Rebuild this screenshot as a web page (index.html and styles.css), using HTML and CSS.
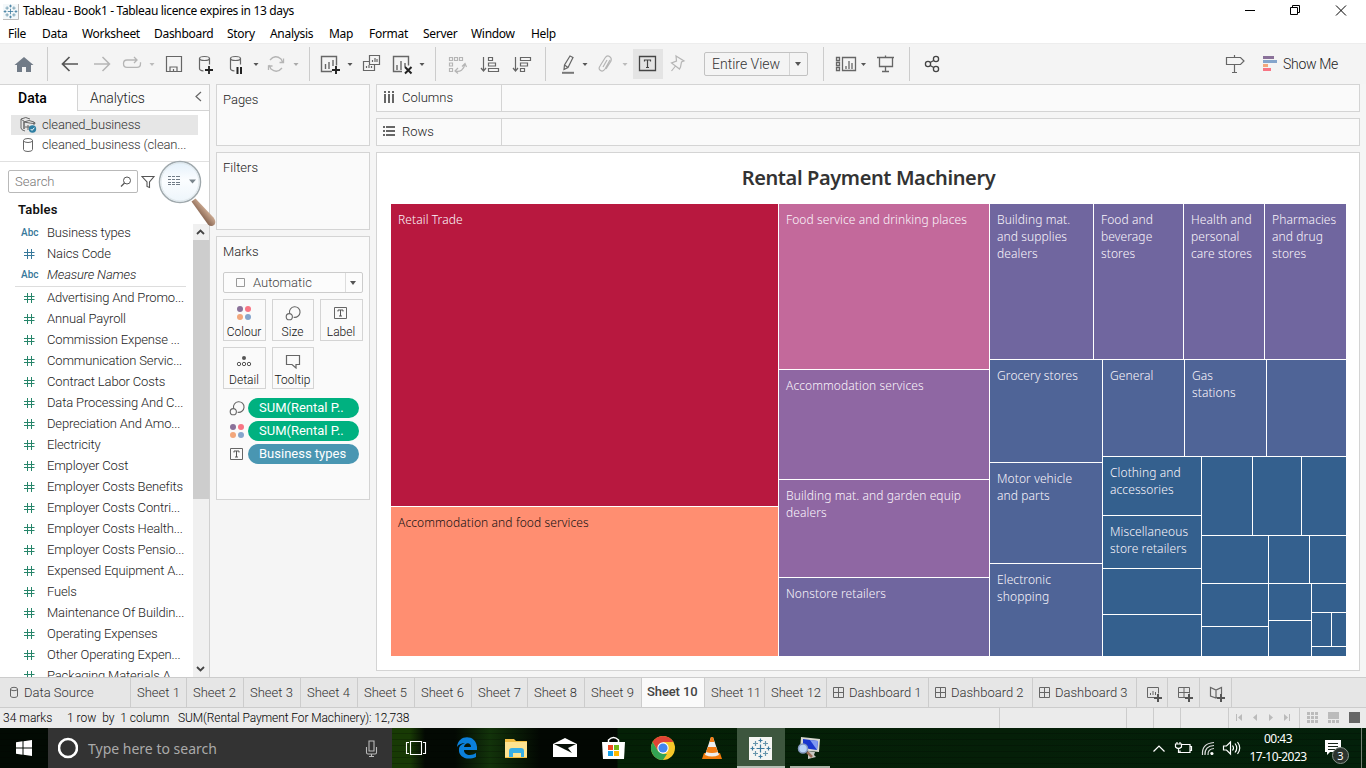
FILE: index.html
```html
<!DOCTYPE html>
<html lang="en">
<head>
<meta charset="utf-8">
<title>Tableau - Book1</title>
<link rel="stylesheet" href="styles.css">
</head>
<body>
<svg width="0" height="0" class="defs">
  <defs>
    <symbol id="hash" viewBox="0 0 12 12"><path d="M4.500 1v10M8.500 1v10M1 4.500h10.500M1 7.500h10.500" fill="none" stroke="currentColor" stroke-width="1"/></symbol>
    <symbol id="dash" viewBox="0 0 12 12"><path d="M.5 .5h10v10h-10zM5.500 .5v10M.5 5.500h10" fill="none" stroke="#666"/></symbol>
    <symbol id="dots" viewBox="0 0 16 16"><circle cx="4" cy="4" r="3" fill="#8a7199"/><circle cx="12" cy="4" r="3" fill="#f87584"/><circle cx="4" cy="12" r="3" fill="#f2a77c"/><circle cx="12" cy="12" r="3" fill="#85a5cc"/></symbol>
    <symbol id="size" viewBox="0 0 16 16"><g fill="none" stroke="#666" stroke-width="1.100"><path d="M4.600 8.300a5.300 5.300 0 1 1 4 3.900"/><circle cx="4.300" cy="11.700" r="3.100"/></g></symbol>
    <symbol id="tbox" viewBox="0 0 14 12"><path d="M.5.5h12v11H.5z" fill="none" stroke="#666"/><path d="M4 4.500V3h5v1.500M6.500 3v6M5 9h3" fill="none" stroke="#555"/></symbol>
    <symbol id="flake" viewBox="0 0 22 22"><g fill="none" stroke="#3c7a9e" stroke-width="1.200"><path d="M11 7v8M7 11h8M11 1v4M9 3h4M11 17v4M9 19h4M3 9v4M1 11h4M19 9v4M17 11h4"/><path stroke="#6795ac" d="M6 3.500v5M3.500 6h5M16 3.500v5M13.500 6h5M6 13.500v5M3.500 16h5M16 13.500v5M13.500 16h5"/></g></symbol>
  </defs>
</svg>
<div class="app">
  <header class="titlebar">
    <svg class="logo" width="16" height="16"><path fill="#f4f8fa" d="M0 0h15v15H0z"/><path d="M15.500 0v15.500H0" fill="none" stroke="#bbb"/><use href="#flake" width="15" height="15"/></svg>
    <span class="wintitle">Tableau - Book1 - Tableau licence expires in 13 days</span>
    <svg width="136" height="24" viewBox="1230 0 136 24" fill="none" stroke="#000"><path d="M1245 10.500h10M1290.500 7.500h7v7h-7zM1292.500 7.500v-2h7v7h-2M1336 5.500l10 10M1346 5.500l-10 10"/></svg>
  </header>
  <nav class="menu"><span>File</span><span>Data</span><span>Worksheet</span><span>Dashboard</span><span>Story</span><span>Analysis</span><span>Map</span><span>Format</span><span>Server</span><span>Window</span><span>Help</span></nav>
  <div class="toolbar">
    <svg width="48" height="41" viewBox="0 43 48 41"><path fill="#717b87" d="M24 57l9.500 8H31v7h-5v-5h-4v5h-5v-7h-2.500z"/><path d="M47.500 47v34" stroke="#ccc"/></svg>
    <svg width="38" height="41" viewBox="48 43 38 41"><path d="M78 64H63M69.500 57l-7 7 7 7" fill="none" stroke="#555" stroke-width="1.700"/></svg>
    <svg width="32" height="41" viewBox="86 43 32 41"><path d="M94 64h15M102.500 57l7 7-7 7" fill="none" stroke="#b5b5b5" stroke-width="1.500"/></svg>
    <svg width="42" height="41" viewBox="118 43 42 41"><path d="M137 60h-10q-3.500 0-3.500 3.700t3.500 3.700h10q3.500 0 3.500-3.700v-1.500M134 57l3 3-3 3" fill="none" stroke="#b5b5b5" stroke-width="1.300"/><path d="M149.500 63h5l-2.500 3z" fill="#bbb"/></svg>
    <svg width="30" height="41" viewBox="160 43 30 41"><path d="M166.500 56.500h15v15h-15zM170 71.500V67h7v4.500M173.500 69v2" fill="none" stroke="#666" stroke-width="1.200"/></svg>
    <svg width="30" height="41" viewBox="190 43 30 41"><g fill="none" stroke="#666" stroke-width="1.200"><ellipse cx="204.500" cy="58.500" rx="5" ry="2"/><path d="M199.500 58.500v10q0 2 4 2.500M209.500 58.500v6"/></g><path d="M209 66v8M205 70h8" stroke="#222" stroke-width="1.800"/></svg>
    <svg width="42" height="41" viewBox="220 43 42 41"><g fill="none" stroke="#666" stroke-width="1.200"><ellipse cx="235.500" cy="58.500" rx="5" ry="2"/><path d="M230.500 58.500v10q0 2 4 2.500M240.500 58.500v6"/></g><path d="M237.500 67v7M241 67v7" stroke="#222" stroke-width="2"/><path d="M253.500 63h5l-2.500 3z" fill="#555"/></svg>
    <svg width="48" height="41" viewBox="262 43 48 41"><path d="M270 60q5-6 11-1l2 4M282 68q-5 6-11 1l-2-4M279.500 62.500h4v-4M272.500 66h-4v4" fill="none" stroke="#b5b5b5" stroke-width="1.300"/><path d="M293.500 63h5l-2.500 3z" fill="#aaa"/><path d="M309.500 47v34" stroke="#ccc"/></svg>
    <svg width="46" height="41" viewBox="310 43 46 41"><path d="M332 71.500h-10.500v-15h15v9M325.500 64v5M329 62v7M333 60v6" fill="none" stroke="#666" stroke-width="1.400"/><path d="M336 66v8M332 70h8" stroke="#222" stroke-width="1.900"/><path d="M347.500 63h5l-2.500 3z" fill="#555"/></svg>
    <svg width="30" height="41" viewBox="356 43 30 41"><path d="M369.500 55.500h10v9h-10zM369 61.500h-5.500v9h11v-6M372.500 60v2M375 58v4M377 59v3M366.500 66v2M369 65v3M371.500 66v2" fill="none" stroke="#666" stroke-width="1.200"/></svg>
    <svg width="50" height="41" viewBox="386 43 50 41"><path d="M402 71.500h-8.500v-15h15v9M397 65v5M401 61v9M405 63v4" fill="none" stroke="#666" stroke-width="1.400"/><path d="M405 67l6.500 6.500m0-6.500l-6.500 6.500" stroke="#222" stroke-width="2"/><path d="M419.500 63h5l-2.500 3z" fill="#555"/><path d="M435.500 47v34" stroke="#ccc"/></svg>
    <svg width="39" height="41" viewBox="436 43 39 41"><path d="M449.500 57.500h3v3h-3zM454.500 57.500h3v3h-3zM459.500 57.500h3v3h-3zM449.500 63h3v3h-3zM449.500 68.500h3v3h-3zM455 71q8 2 10-7M462 66.500l3-3 1.500 3.500M458 68l-3 3 3 2.500" fill="none" stroke="#b5b5b5" stroke-width="1.200"/></svg>
    <svg width="32" height="41" viewBox="475 43 32 41"><path d="M483.500 57v14M481 68l2.500 3 2.500-3M488.500 57.500h4v3h-4zM488.500 63h7v3h-7zM488.500 68.500h10v3h-10z" fill="none" stroke="#666" stroke-width="1.200"/></svg>
    <svg width="39" height="41" viewBox="507 43 39 41"><path d="M515.500 57v14M513 68l2.500 3 2.500-3M520.500 57.500h10v3h-10zM520.500 63h7v3h-7zM520.500 68.500h4v3h-4z" fill="none" stroke="#666" stroke-width="1.200"/><path d="M545.500 47v34" stroke="#ccc"/></svg>
    <svg width="46" height="41" viewBox="546 43 46 41"><path d="M570 56l3 1.500-5 10-4 2 .5-4.500zM564.500 65l3.500 2.500" fill="none" stroke="#666" stroke-width="1.200"/><path d="M562 72.800h12" stroke="#777" stroke-width="2"/><path d="M582.500 63h5l-2.500 3z" fill="#555"/></svg>
    <svg width="41" height="41" viewBox="592 43 41 41"><path d="M610 60l-5 9q-2 3-4.500 1.500T600 66l5-8q2-3 4.500-1.500T611 61l-5 8M607 60l-4 7" fill="none" stroke="#b5b5b5" stroke-width="1.200"/><path d="M622.500 63h5l-2.500 3z" fill="#bbb"/></svg>
    <svg width="30" height="41" viewBox="633 43 30 41"><path fill="#e4e4e4" d="M633 49h30v30h-30z"/><path d="M639.500 56.500h16v14h-16z" fill="none" stroke="#444" stroke-width="1.300"/><path d="M644.500 61.500v-1.500h6v1.500M647.500 60v7M646 67.500h3" fill="none" stroke="#444" stroke-width="1.200"/></svg>
    <svg width="41" height="41" viewBox="663 43 41 41"><path d="M676 56l8 5-2.500 1-1 5-1 2-8-6 5-2zM675.500 66l-4 5" fill="none" stroke="#b5b5b5" stroke-width="1.200"/></svg>
    <div class="fit"><span>Entire View</span><i></i></div>
    <svg width="62" height="41" viewBox="808 43 62 41"><path d="M823.500 47v34" stroke="#ccc"/><path d="M836.500 57.500h3v3h-3zM836.500 62.500h3v3h-3zM836.500 67.500h3v3h-3zM842.500 57.500h13v13h-13zM846 66v3M849 61v8M852 63v6" fill="none" stroke="#666" stroke-width="1.300"/><path d="M861 63h5l-2.500 3z" fill="#555"/></svg>
    <svg width="40" height="41" viewBox="870 43 40 41"><path d="M877 57.500h17M879.500 58v8.500h13V58M885.500 66.500v5M882 71.500h7M885.500 55.500v2" fill="none" stroke="#666" stroke-width="1.300"/><path d="M909.500 47v34" stroke="#ccc"/></svg>
    <svg width="40" height="41" viewBox="910 43 40 41"><g fill="none" stroke="#444" stroke-width="1.300"><circle cx="928" cy="64" r="2.600"/><circle cx="936" cy="59" r="2.600"/><circle cx="936" cy="69" r="2.600"/><path d="M930.200 62.500l3.500-2M930.200 65.500l3.500 2"/></g></svg>
    <div class="showme">
      <svg width="58" height="41" viewBox="1220 43 58 41"><path d="M1226.500 57.500h14l3.500 3.500-3.500 3.500h-14zM1234.500 55v2.500M1234.500 64.500v8M1232 72.500h5" fill="none" stroke="#666" stroke-width="1.200"/><path fill="#8a7199" d="M1263 56h11v3h-11z"/><path fill="#85a5cc" d="M1263 60h14v3h-14z"/><path fill="#f2a77c" d="M1263 64h5v3h-5z"/><path fill="#f87584" d="M1263 68h8v3h-8z"/></svg>
      <span>Show Me</span>
    </div>
  </div>

  <main class="work">
    <aside class="data">
      <div class="ptabs"><b>Data</b><span>Analytics</span><svg width="10" height="12"><path d="M8 1L3 5.500 8 10" fill="none" stroke="#666" stroke-width="1.200"/></svg></div>
      <div class="sources">
        <div class="src on"><svg width="31" height="20" viewBox="11 115 31 20"><g fill="none" stroke="#666"><path d="M21 119v9q0 2 4 3M21 119q5-3 9 0M21 119q2 2 3 2v8M24 122q5-3 10 0t-10 0v7M34 122v3M25 127h5M28 125v5"/></g><circle cx="32.500" cy="129" r="3.700" fill="#2f7fa3"/><path d="M30.700 129l1.300 1.400 2.400-2.700" fill="none" stroke="#fff"/></svg><span>cleaned_business</span></div>
        <div class="src"><svg width="31" height="20" viewBox="11 135 31 20"><g fill="none" stroke="#666"><ellipse cx="28" cy="140.500" rx="4.500" ry="2"/><path d="M23.500 140.500v9q0 2 4.500 2t4.500-2v-9"/></g></svg><span>cleaned_business (clean...</span></div>
      </div>
      <div class="find">
        <div class="searchbox"><span>Search</span><svg width="12" height="12"><circle cx="7" cy="4.500" r="3.500" fill="none" stroke="#555"/><path d="M4.500 7L1 10.500" stroke="#555" stroke-width="1.300"/></svg></div>
        <svg width="15" height="14"><path d="M1 1.500h12L8.500 7v5.500l-2.500-1V7z" fill="none" stroke="#555" stroke-width="1.100"/></svg>
        <svg class="lens" width="62" height="68" viewBox="156 158 62 68"><defs><linearGradient id="lg" x1="0" y1="0" x2="0" y2="1"><stop offset="0" stop-color="#e3f0fa"/><stop offset=".45" stop-color="#fbfdff"/><stop offset="1" stop-color="#edf5fb"/></linearGradient><linearGradient id="wood" x1="0" y1="1" x2="1" y2="0"><stop offset=".35" stop-color="#805e4b"/><stop offset=".6" stop-color="#c6a48c"/></linearGradient></defs><path d="M191.500 201.500l4-3 18 19q3 4 1 7-3 3-6.500 0z" fill="url(#wood)"/><circle cx="180" cy="182" r="20.500" fill="url(#lg)" stroke="#9fa8ac" stroke-width="1.500"/><circle cx="180" cy="182" r="19" fill="none" stroke="#dfe7eb"/><path d="M168 176.500h3M172 176.500h3M176 176.500h4M168 179.500h3M172 179.500h3M176 179.500h4M168 182.500h3M172 182.500h3M176 182.500h4M168 184.500h3M172 184.500h3M176 184.500h4" stroke="#707b86" stroke-width="1"/><path d="M189 179.500h7l-3.500 4z" fill="#7a858c"/></svg>
      </div>
      <h3>Tables</h3>
      <div class="fields">
        <ul class="dims"><li><em>Abc</em>Business types</li><li><svg><use href="#hash"/></svg>Naics Code</li><li><em>Abc</em><i>Measure Names</i></li></ul>
        <ul class="meas">
          <li><svg><use href="#hash"/></svg>Advertising And Promo...</li>
          <li><svg><use href="#hash"/></svg>Annual Payroll</li>
          <li><svg><use href="#hash"/></svg>Commission Expense ...</li>
          <li><svg><use href="#hash"/></svg>Communication Servic...</li>
          <li><svg><use href="#hash"/></svg>Contract Labor Costs</li>
          <li><svg><use href="#hash"/></svg>Data Processing And C...</li>
          <li><svg><use href="#hash"/></svg>Depreciation And Amo...</li>
          <li><svg><use href="#hash"/></svg>Electricity</li>
          <li><svg><use href="#hash"/></svg>Employer Cost</li>
          <li><svg><use href="#hash"/></svg>Employer Costs Benefits</li>
          <li><svg><use href="#hash"/></svg>Employer Costs Contri...</li>
          <li><svg><use href="#hash"/></svg>Employer Costs Health...</li>
          <li><svg><use href="#hash"/></svg>Employer Costs Pensio...</li>
          <li><svg><use href="#hash"/></svg>Expensed Equipment A...</li>
          <li><svg><use href="#hash"/></svg>Fuels</li>
          <li><svg><use href="#hash"/></svg>Maintenance Of Buildin...</li>
          <li><svg><use href="#hash"/></svg>Operating Expenses</li>
          <li><svg><use href="#hash"/></svg>Other Operating Expen...</li>
          <li><svg><use href="#hash"/></svg>Packaging Materials A...</li>
        </ul>
        <div class="scroll"><svg width="16" height="16"><path d="M4 10l3.500-3.500L11 10" fill="none" stroke="#444" stroke-width="1.800"/></svg><div class="thumb"></div><svg width="16" height="16"><path d="M4 6l3.500 3.500L11 6" fill="none" stroke="#444" stroke-width="1.800"/></svg></div>
      </div>
    </aside>

    <section class="cards">
      <div class="card pages">Pages</div>
      <div class="card filters">Filters</div>
      <div class="card marks">
        <div>Marks</div>
        <div class="mtype"><svg width="11" height="11"><path d="M1.500 1.500h8v8h-8z" fill="none" stroke="#999"/></svg><span>Automatic</span><i></i></div>
        <div class="mbtns">
          <div><svg width="16" height="16"><use href="#dots"/></svg>Colour</div>
          <div><svg width="16" height="16"><use href="#size"/></svg>Size</div>
          <div><svg width="14" height="16"><use href="#tbox" y="2" width="14" height="12"/></svg>Label</div>
          <div><svg width="16" height="16"><circle cx="8" cy="5" r="2" fill="#555"/><g fill="none" stroke="#555"><circle cx="3" cy="11" r="1.700"/><circle cx="8" cy="11" r="1.700"/><circle cx="13" cy="11" r="1.700"/></g></svg>Detail</div>
          <div><svg width="16" height="16"><path d="M1.500 2.500h13v9H11v3.500l-4-3.500H1.500z" fill="none" stroke="#666" stroke-width="1.200"/></svg>Tooltip</div>
        </div>
        <div class="pills">
          <div><svg width="16" height="16"><use href="#size"/></svg><span>SUM(Rental P..</span></div>
          <div><svg width="16" height="16"><use href="#dots"/></svg><span>SUM(Rental P..</span></div>
          <div><svg width="16" height="16"><use href="#tbox" x="1" y="2" width="14" height="12"/></svg><span class="dim">Business types</span></div>
        </div>
      </div>
    </section>

    <section class="sheet">
      <div class="shelf"><div><svg width="12" height="13"><path d="M1 0h2v2H1zM5 0h2v2H5zM9 0h2v2H9zM1 3h2v9H1zM5 3h2v9H5zM9 3h2v9H9z" fill="#666"/></svg>Columns</div></div>
      <div class="shelf"><div><svg width="12" height="13"><path d="M0 1h2v2H0zM3 1h9v2H3zM0 5h2v2H0zM3 5h9v2H3zM0 9h2v2H0zM3 9h9v2H3z" fill="#666"/></svg>Rows</div></div>
      <div class="view">
        <h1>Rental Payment Machinery</h1>
        <div class="map row">
          <div class="col" style="flex-basis:387px"><p class="crim" style="flex-basis:302px">Retail Trade</p><p class="salm">Accommodation and food services</p></div>
          <div class="col" style="flex-basis:210px"><p class="pink" style="flex-basis:165px">Food service and drinking places</p><p class="viol" style="flex-basis:109px">Accommodation services</p><p class="viol" style="flex-basis:97px">Building mat. and garden equip dealers</p><p class="purp">Nonstore retailers</p></div>
          <div class="col last">
            <div class="row" style="flex-basis:155px"><p class="purp" style="flex-basis:103px">Building mat.<br>and supplies<br>dealers</p><p class="purp" style="flex-basis:89px">Food and<br>beverage<br>stores</p><p class="purp" style="flex-basis:80px">Health and<br>personal<br>care stores</p><p class="purp">Pharmacies<br>and drug<br>stores</p></div>
            <div class="row last">
              <div class="col" style="flex-basis:112px"><p class="indi" style="flex-basis:102px">Grocery stores</p><p class="indi" style="flex-basis:100px">Motor vehicle<br>and parts</p><p class="indi">Electronic<br>shopping</p></div>
              <div class="col last">
                <div class="row" style="flex-basis:96px"><p class="indi" style="flex-basis:81px">General</p><p class="indi" style="flex-basis:81px">Gas<br>stations</p><p class="indi"></p></div>
                <div class="row last">
                  <div class="col" style="flex-basis:98px"><p class="blue" style="flex-basis:58px">Clothing and<br>accessories</p><p class="blue" style="flex-basis:52px">Miscellaneous<br>store retailers</p><p class="blue" style="flex-basis:45px"></p><p class="blue"></p></div>
                  <div class="col last">
                    <div class="row" style="flex-basis:78px"><p class="blue" style="flex-basis:50px"></p><p class="blue" style="flex-basis:48px"></p><p class="blue"></p></div>
                    <div class="row" style="flex-basis:47px"><p class="blue" style="flex-basis:66px"></p><p class="blue" style="flex-basis:40px"></p><p class="blue"></p></div>
                    <div class="row last">
                      <div class="col" style="flex-basis:66px"><p class="blue" style="flex-basis:42px"></p><p class="blue"></p></div>
                      <div class="col" style="flex-basis:42px"><p class="blue" style="flex-basis:36px"></p><p class="blue"></p></div>
                      <div class="col last"><p class="blue" style="flex-basis:28px"></p><div class="row" style="flex-basis:33px"><p class="blue" style="flex-basis:19px"></p><p class="blue"></p></div><p class="blue"></p></div>
                    </div>
                  </div>
                </div>
              </div>
            </div>
          </div>
        </div>
      </div>
    </section>
  </main>

  <nav class="tabs">
    <span class="ds"><svg width="10" height="13"><ellipse cx="5" cy="3" rx="3.500" ry="1.700" fill="none" stroke="#666"/><path d="M1.500 3v7q0 1.500 3.500 1.500T8.500 10V3" fill="none" stroke="#666"/></svg>Data Source</span>
    <span>Sheet 1</span><span>Sheet 2</span><span>Sheet 3</span><span>Sheet 4</span><span>Sheet 5</span><span>Sheet 6</span><span>Sheet 7</span><span>Sheet 8</span><span>Sheet 9</span><span class="act">Sheet 10</span><span>Sheet 11</span><span>Sheet 12</span>
    <span><svg width="12" height="12"><use href="#dash"/></svg>Dashboard 1</span><span><svg width="12" height="12"><use href="#dash"/></svg>Dashboard 2</span><span><svg width="12" height="12"><use href="#dash"/></svg>Dashboard 3</span>
    <span class="add"><svg width="17" height="16"><path d="M9 11.500H1.500v-10h11v6M4.500 7v2M7 5v4M9.500 6v3" fill="none" stroke="#666"/><path d="M12 8v8M8 12h8" stroke="#555" stroke-width="2"/></svg></span>
    <span class="add"><svg width="17" height="16"><path d="M8 11.500H1.500v-10h11v6M7 1.500v10M1.500 6.500h11" fill="none" stroke="#666"/><path d="M12 8v8M8 12h8" stroke="#555" stroke-width="2"/></svg></span>
    <span class="add"><svg width="17" height="16"><path d="M8 11l-1 1-5.500-2V1.500L7 4l5.500-2.500V8M7 4v8" fill="none" stroke="#666" stroke-width="1.200"/><path d="M12 8v8M8 12h8" stroke="#555" stroke-width="2"/></svg></span>
  </nav>
  <div class="status">
    <span class="s1">34 marks</span><span class="s2">1 row&nbsp; by&nbsp; 1 column</span><span class="s3">SUM(Rental Payment For Machinery): 12,738</span>
    <svg width="367" height="20" viewBox="999 708 367 20"><path d="M999.500 708v20M1126.500 708v20M1153.500 708v20M1180.500 708v20M1228.500 708v20M1299.500 708v20" stroke="#ccc"/><path fill="#bbb" d="M1236 714h1v7h-1zM1242 714v7l-4-3.500zM1257 714v7l-4-3.500zM1269 714v7l4-3.500zM1284 714v7l4-3.500zM1289 714h1v7h-1zM1307 712h3v3h-3zM1311 712h3v3h-3zM1315 712h3v3h-3zM1307 716h3v3h-3zM1311 716h3v3h-3zM1315 716h3v3h-3zM1307 720h3v3h-3zM1311 720h3v3h-3zM1315 720h3v3h-3zM1328 712h11v7h-11zM1328 720h3v3h-3zM1332 720h3v3h-3zM1336 720h3v3h-3z"/><path fill="#666" d="M1349 712h11v11h-11z"/></svg>
  </div>

  <footer class="taskbar">
    <svg width="48" height="40" viewBox="0 728 48 40"><path fill="#fff" d="M16 742.300l6.500-1v6.200H16zM23.500 741.200l8.500-1.200v7.500h-8.500zM16 748.500h6.500v6.200l-6.500-1zM23.500 748.500h8.500v7.500l-8.500-1.200z"/></svg>
    <div class="cortana"><svg width="20" height="22"><circle cx="10" cy="11" r="9" fill="none" stroke="#fff" stroke-width="2.600"/></svg><span>Type here to search</span><svg width="13" height="17"><path d="M4 1h5v10H4zM1.500 7v5.500q0 1.500 1.500 1.500h7q1.500 0 1.500-1.500V7M6.500 14v2.500M4 16.500h5" fill="none" stroke="#bbb" stroke-width="1.100"/></svg></div>
    <svg width="48" height="40" viewBox="392 728 48 40"><path d="M410.500 741.500h11v13h-11zM409 742.500h-2.500v11h2.500M423 742.500h2.500v11H423" fill="none" stroke="#fff" stroke-width="1.100"/></svg>
    <svg width="52" height="40" viewBox="440 728 52 40"><path fill="#0b80da" d="M457 747c1-13 19-13 20 0v3h-13c0 6 8 6 12 3v4c-9 4-18 0-17-8 0-3 3-5 6-6-3 0-6 1-8 4zM464 747h7c0-5-6-5-7 0z"/></svg>
    <svg width="48" height="40" viewBox="492 728 48 40"><path fill="#f2bd42" d="M505 739h9l2 2h11v17h-22z"/><path fill="#fee391" d="M505 742h22v15h-22z"/><path fill="#38aee7" d="M509 757v-6q0-3 3-3h9q3 0 3 3v6h-3v-4h-8v4z"/></svg>
    <svg width="50" height="40" viewBox="540 728 50 40"><path fill="#fff" d="M553 744l12-6 12 6v13h-24z"/><path fill="#071007" d="M554 744h22l-8 4 4 5-7-3.500z"/></svg>
    <svg width="48" height="40" viewBox="590 728 48 40"><path d="M608.500 743v-3q5-5 10 0v3" fill="none" stroke="#fff" stroke-width="1.500"/><path fill="#fff" d="M602 742h23l-1 17h-21z"/><path fill="#ee4b23" d="M608 745h5v5h-5z"/><path fill="#75b917" d="M614 745h5v5h-5z"/><path fill="#15a3ec" d="M608 751h5v5h-5z"/><path fill="#ffb900" d="M614 751h5v5h-5z"/></svg>
    <svg width="50" height="40" viewBox="638 728 50 40"><circle cx="663" cy="748" r="12" fill="#f7c729"/><path fill="#e14335" d="M652.600 742a12 12 0 0 1 20.800 0H663v6l-5 3z"/><path fill="#33a353" d="M652.600 742l5.400 9 5 3h4l-4 6a12 12 0 0 1-10.400-18z"/><circle cx="663" cy="748" r="5.700" fill="#fff"/><circle cx="663" cy="748" r="4.600" fill="#4386ef"/></svg>
    <svg width="49" height="40" viewBox="688 728 49 40"><path fill="#f27a0b" d="M704 753h16l2 6h-20z"/><path fill="#eee" d="M711 737h2l6 18q-7 3-14 0z"/><path fill="#f47d14" d="M711 737h2l1.500 5h-5zM708 747h8l2 5q-6 2-12 0z"/></svg>
    <div class="running"><svg width="23" height="23"><path fill="#f5f5f3" d="M0 0h23v23H0z"/><use href="#flake" x=".5" y=".5" width="22" height="22"/></svg></div>
    <svg width="50" height="40" viewBox="785 728 50 40"><path fill="#d8d7d0" d="M801 737l19 2-1 13-19-2z"/><path fill="#1936ce" d="M803 739l15 2-1 9-14-2z"/><path fill="#7f98f1" d="M810 740l8 1-1 9z"/><path fill="#c9c8c4" d="M808 751l7 1-1 3 2 2-8 2z"/><path stroke="#9a6d58" stroke-width="2.500" d="M807 752l5 5"/><circle cx="803" cy="748.500" r="4.500" fill="#b9d3f5" stroke="#8498be" stroke-width="1.500"/><path fill="#aab4a7" d="M790 766h40v2h-40z"/></svg>
    <div class="tray">
      <svg width="100" height="40" viewBox="1145 728 100 40"><g fill="none" stroke="#fff" stroke-width="1.200"><path d="M1153.500 751.500l5.500-5.500 5.500 5.500M1181 744.500h9v8h-10v-2M1190 746.500h1.500v4h-1.500M1175.500 744h6v3q-3 3-6 0zM1177 742v2M1180 742v2M1178.500 748.500v4h2M1223.500 746h3l4-4v12l-4-4h-3zM1232.500 745.500q2 2.500 0 5M1235 743.500q3.500 4.500 0 9M1237.500 742q4.500 6 0 12"/><path d="M1211 752.500q0 1.500 1 2M1208 755q-.5-6 6-6.500M1205 755q-.5-9 9-9.500M1202.500 755q-1-11.500 11.500-12.500" stroke="#ddd"/></g><circle cx="1212" cy="753.500" r="1.500" fill="#fff"/></svg>
      <div class="clock"><span>00:43</span><span>17-10-2023</span></div>
      <svg width="53" height="40" viewBox="1313 728 53 40"><path fill="#fff" d="M1325 740h16v12h-11l-3 3v-3h-2z"/><path stroke="#17251a" d="M1328 743.500h10M1328 746.500h10M1328 749.500h7"/><circle cx="1340.500" cy="755.500" r="8" fill="#2c342e" stroke="#89958c"/><text x="1340.500" y="759.500" text-anchor="middle" class="badge">3</text><path d="M1361.500 728v40" stroke="#748074"/></svg>
    </div>
  </footer>
</div>
</body>
</html>
```
FILE: styles.css
```css
* { box-sizing: border-box; }
body { margin: 0; background: #f5f5f5; overflow: hidden; font-family: Roboto, "Noto Sans", sans-serif; font-size: 13px; font-weight: 300; color: #222; }
svg { display: block; flex: none; }
.defs { position: absolute; }
h1, h3, p, ul { margin: 0; padding: 0; }
ul { list-style: none; }
.app { width: 1366px; height: 768px; display: flex; flex-direction: column; white-space: nowrap; }

.titlebar { height: 24px; background: #fff; display: flex; align-items: center; padding-left: 3px; font: 12px "Noto Sans", sans-serif; color: #000; }
.wintitle { margin-left: 4px; flex: 1; letter-spacing: -.34px; line-height: 22px; padding-bottom: 2px; }
.titlebar > svg:last-child { width: 136px; }
.menu { height: 19px; background: #fff; display: grid; grid-template-columns: 34px 40px 72px 73px 43px 59px 40px 54px 48px 60px 40px; padding-left: 8px; font: 12px/19px "Noto Sans", sans-serif; letter-spacing: -.3px; color: #000; }

.toolbar { height: 41px; background: #f4f4f4; display: flex; border-top: 1px solid #ededed; }
.toolbar > svg { margin-top: -1px; }
.fit { width: 104px; height: 24px; margin-top: 8px; border: 1px solid #c2c2c2; border-radius: 2px; display: flex; font-size: 14px; line-height: 22px; color: #333; }
.fit span { width: 85px; padding-left: 7px; border-right: 1px solid #d4d4d4; }
.fit i { border: 3.5px solid transparent; border-top: 4px solid #555; border-bottom: 0; width: 0; height: 0; margin: 9px 0 0 5px; }
.showme { margin-left: auto; width: 146px; display: flex; font-size: 14px; line-height: 40px; letter-spacing: -.3px; }
.showme svg { margin-top: -1px; }
.showme span { margin-left: 5px; }

.work { height: 593px; display: flex; }
.data { width: 210px; background: #fff; border-right: 1px solid #d0d0d0; display: flex; flex-direction: column; border-top: 1px solid #d4d4d4; }
.ptabs { height: 26px; display: flex; font-size: 14px; line-height: 26px; }
.ptabs b { width: 77px; padding-left: 18px; color: #000; font-weight: 500; }
.ptabs span { flex: 1; background: #fafafa; border-left: 1px solid #d4d4d4; border-bottom: 1px solid #d4d4d4; padding-left: 12px; letter-spacing: -.1px; }
.ptabs svg { width: 16px; height: 26px; padding-top: 6px; background: #fafafa; border-bottom: 1px solid #d4d4d4; }
.sources { height: 51px; padding: 4px 11px 0; border-bottom: 1px solid #e0e0e0; color: #333; }
.src { height: 20px; line-height: 20px; display: flex; letter-spacing: -.15px; }
.on { background: #e6e6e6; }
.find { position: relative; height: 40px; padding: 8px 0 0 8px; display: flex; gap: 3px; }
.find > svg { margin-top: 5px; }
.searchbox { width: 130px; height: 23px; border: 1px solid #b9b9b9; border-radius: 2px; display: flex; justify-content: space-between; padding: 0 5px 0 6px; line-height: 21px; color: #777; }
.searchbox svg { margin-top: 5px; }
.lens { position: absolute; left: 156px; top: -9px; z-index: 3; }
.data h3 { height: 20px; padding-left: 18px; font-size: 13px; line-height: 16px; color: #111; font-weight: 600; letter-spacing: .2px; }
.fields { flex: 1; position: relative; overflow: hidden; }
.fields li { height: 21px; line-height: 21px; display: flex; align-items: center; padding-left: 8px; letter-spacing: -.15px; }
.fields li em { flex: none; width: 24px; margin: 0 2px 0 -2px; font: 500 10px Roboto, sans-serif; letter-spacing: 0; color: #37789a; }
.fields li svg { width: 12px; height: 12px; margin-right: 12px; color: #26856a; }
.dims { margin: 0 23px 0 15px; height: 65px; border-bottom: 1px solid #ddd; }
.fields .dims svg { color: #37789a; }
.meas { margin: 0 15px; }
.scroll { position: absolute; right: 0; top: 2px; bottom: 0; width: 16px; background: #f0f0f0; display: flex; flex-direction: column; }
.thumb { height: 259px; background: #cdcdcd; margin-bottom: auto; }

.cards { width: 154px; margin-left: 6px; display: flex; flex-direction: column; gap: 6px; }
.card { background: #fafafa; border: 1px solid #d4d4d4; padding: 6px 6px 0; line-height: 17px; color: #222; }
.pages { height: 62px; }
.filters { height: 78px; }
.marks { height: 264px; }
.mtype { height: 21px; margin-top: 12px; border: 1px solid #ccc; border-radius: 2px; background: #fcfcfc linear-gradient(#ddd, #ddd) 121px 0 / 1px 19px no-repeat; display: flex; align-items: center; line-height: 19px; color: #444; padding-left: 11px; }
.mtype span { width: 91px; padding-left: 7px; margin-right: 7px; }
.mtype i { border: 3.5px solid transparent; border-top: 4px solid #555; border-bottom: 0; margin-left: 6px; }
.mbtns { display: grid; grid-template-columns: 43px 42px 43px; grid-auto-rows: 42px; gap: 6px; margin-top: 6px; }
.mbtns > div { border: 1px solid #d4d4d4; display: flex; flex-direction: column; align-items: center; padding: 5px 1px 0 0; gap: 3px; font-size: 12px; line-height: 17px; color: #111; }
.pills { margin-top: 9px; display: flex; flex-direction: column; gap: 3px; }
.pills > div { height: 20px; display: flex; align-items: center; padding-left: 6px; gap: 3px; }
.pills span { width: 111px; height: 20px; border-radius: 10px; background: #00b180; color: #fff; line-height: 20px; padding-left: 11px; font-weight: 400; }
.pills .dim { background: #4996b2; }

.sheet { width: 984px; margin-left: 6px; display: flex; flex-direction: column; gap: 6px; }
.shelf { height: 28px; border: 1px solid #d4d4d4; background: #fafafa; }
.shelf > div { width: 125px; height: 26px; border-right: 1px solid #d4d4d4; padding: 0 0 1px 6px; display: flex; align-items: center; gap: 7px; color: #222; }
.view { height: 519px; background: #fff; border: 1px solid #d4d4d4; padding: 9px 13px 0 14px; }
.view h1 { height: 42px; text-align: center; font: 600 20px/32px "Noto Sans", sans-serif; letter-spacing: -.38px; color: #333; }
.map { width: 955px; height: 452px; }
.row, .col { display: flex; gap: 1px; min-width: 0; min-height: 0; }
.col { flex-direction: column; }
.map .row, .map .col, .map p { flex-grow: 0; flex-shrink: 0; }
.map .last, .map p:last-child { flex: 1 1 0; }
.map p { padding: 8px 7px 0; font: 300 12px/16.8px "Noto Sans", sans-serif; letter-spacing: .1px; color: #fbf6fc; white-space: normal; min-width: 0; min-height: 0; overflow: hidden; }
.map p:empty { padding: 0; }
.map .crim { background: #b8183f; }
.map .salm { background: #ff8e71; color: #111; }
.map .pink { background: #c3699b; }
.map .viol { background: #8f67a3; }
.map .purp { background: #70669f; }
.map .indi { background: #4f6497; }
.map .blue { background: #34608e; }

.tabs { height: 31px; background: #e6e6e6; border-top: 1px solid #ccc; border-bottom: 1px solid #ccc; display: grid; grid-template-columns: 131px 56px 57px 57px 57px 57px 57px 56px 57px 57px 63px 60px 62px 102px 104px 104px 31px 32px 32px; line-height: 29px; color: #333; }
.tabs span { border-right: 1px solid #ccc; padding-left: 6px; display: flex; align-items: center; gap: 4px; }
.tabs .ds { padding-left: 9px; gap: 5px; }
.tabs .act { background: #fafafa; color: #444; font-weight: 500; padding-left: 5px; letter-spacing: -.1px; line-height: 27px; align-items: flex-start; }
.tabs .add { padding: 2px 0 0 9px; }
.status { height: 20px; background: #ebebeb; display: flex; line-height: 20px; font-size: 12px; color: #000; }
.s1 { width: 67px; padding-left: 3px; }
.s2 { width: 111px; }
.s3 { flex: 1; letter-spacing: -.1px; }

.taskbar { height: 40px; background: repeating-linear-gradient(#0000 0 5px, #0003 5px 6px), linear-gradient(90deg, #020a03 0 48px, #183a05 392px 410px, #030903 425px 455px, #12330a 490px, #020702 540px 617px, #042006 618px, #051f08 1000px, #03200a 1366px); display: flex; }
.cortana { width: 344px; background: #333; display: flex; align-items: center; padding: 0 14px 0 10px; font: 14px "Noto Sans", sans-serif; color: #aaa; }
.cortana span { flex: 1; margin-left: 10px; }
.running { width: 48px; background: #3d563e; border-bottom: 2px solid #b5c1b5; padding: 9px 0 0 12px; }
.tray { margin-left: auto; display: flex; }
.clock { width: 68px; text-align: center; display: flex; flex-direction: column; font: 12px/18px "Noto Sans", sans-serif; letter-spacing: -.55px; color: #fff; padding: 2px 2px 0 0; }
.badge { font: 11px "Noto Sans", sans-serif; fill: #fff; }
```
